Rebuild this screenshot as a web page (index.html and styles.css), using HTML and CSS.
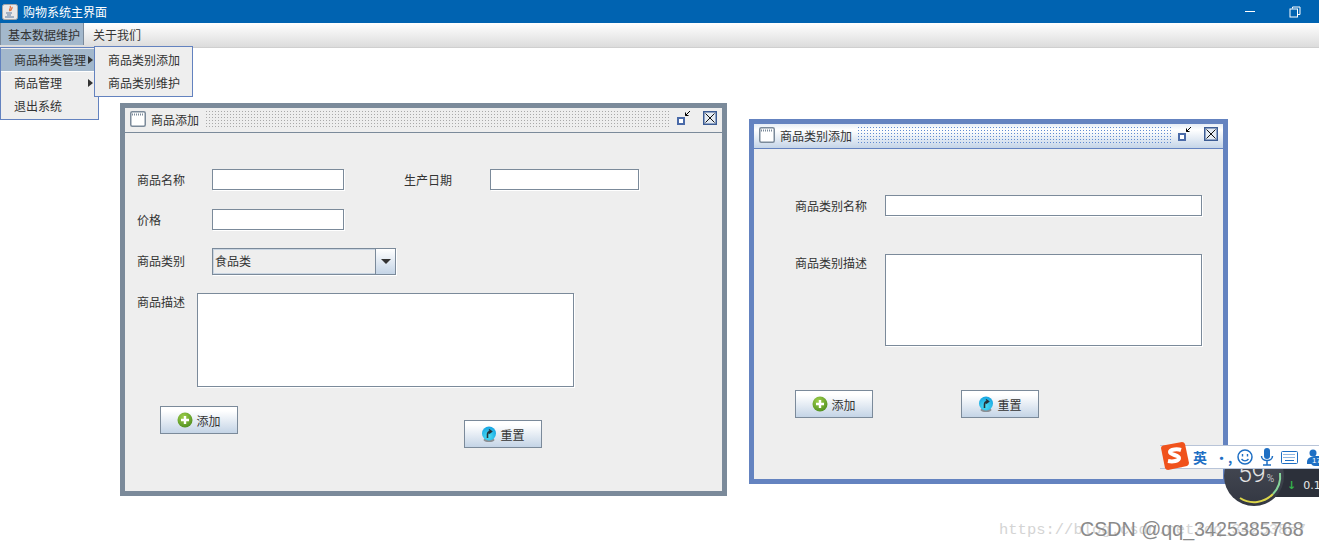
FILE: index.html
```html
<!DOCTYPE html>
<html lang="zh-CN">

<head>
    <meta charset="UTF-8">
    <title>购物系统主界面</title>
    <link rel="stylesheet" href="styles.css">
</head>

<body>
    <svg class="defs" width="0" height="0">
        <defs>
            <radialGradient id="green-ball" cx="40%" cy="30%" r="80%">
                <stop offset="0" stop-color="#9fd04a" />
                <stop offset="1" stop-color="#4a8a1e" />
            </radialGradient>
            <radialGradient id="blue-ball" cx="45%" cy="70%" r="75%">
                <stop offset="0" stop-color="#4fe0f5" />
                <stop offset="1" stop-color="#0f9fe0" />
            </radialGradient>
        </defs>
    </svg>

    <div class="titlebar">
        <div class="app-title">
            <svg class="java-icon" width="16" height="16" viewBox="0 0 16 16">
                <rect x="0.5" y="0.5" width="15" height="15" rx="2" fill="#e8e8e8" stroke="#a8a8a8" />
                <path d="M8 2c2 2-2 3 0 5M10 3c1 2-2 2-1 4" fill="none" stroke="#e0703c" stroke-width="1.200" />
                <path d="M4 8.500h6v1H4zM5 10.500h4v1H5zM3 12.500h9v1H3z" fill="#5a7ba0" />
            </svg>
            <span>购物系统主界面</span>
        </div>
        <div class="win-buttons">
            <svg width="12" height="12" viewBox="0 0 12 12">
                <path d="M1 5.500h10" stroke="#fff" stroke-width="1" />
            </svg>
            <svg width="12" height="12" viewBox="0 0 12 12">
                <path d="M3.500 2.500V1h7.500v7.500H9" fill="none" stroke="#fff" />
                <rect x="1" y="3" width="7.500" height="8" fill="none" stroke="#fff" />
            </svg>
        </div>
    </div>

    <div class="menubar">
        <div class="menu-title selected">基本数据维护</div>
        <div class="menu-title">关于我们</div>
    </div>

    <div class="desktop">
        <div class="popup main-popup">
            <div class="popup-item selected">商品种类管理<i class="arrow"></i></div>
            <div class="popup-item">商品管理<i class="arrow"></i></div>
            <div class="popup-item">退出系统</div>
        </div>
        <div class="popup sub-popup">
            <div class="popup-item">商品类别添加</div>
            <div class="popup-item">商品类别维护</div>
        </div>

        <!-- 商品添加 -->
        <div class="frame goods-frame">
            <div class="frame-title">
                <svg class="frame-icon" width="16" height="16" viewBox="0 0 16 16">
                    <rect x="0.750" y="0.750" width="14.500" height="14.500" rx="1.500" fill="#fff" stroke="#7b8a9a" stroke-width="1.500" />
                    <path d="M2 3.500h12" stroke="#7b8a9a" stroke-dasharray="1 1" stroke-width="2" />
                </svg>
                <span>商品添加</span>
                <div class="dots"></div>
                <svg class="ctl-min" width="16" height="16" viewBox="0 0 16 16">
                    <rect x="2" y="8" width="6" height="6" fill="#fff" stroke="#4a6aa8" stroke-width="2" />
                    <path d="M14 1L9.500 5.500M9.500 2.500v3h3" fill="none" stroke="#000" />
                </svg>
                <svg class="ctl-close" width="14" height="14" viewBox="0 0 14 14">
                    <rect x="0.750" y="0.750" width="12.500" height="12.500" fill="#e4ebf3" stroke="#3c5c94" stroke-width="1.500" />
                    <path d="M2.500 2.500l9 9M11.500 2.500l-9 9" stroke="#111" />
                </svg>
            </div>
            <div class="goods-body">
                <div class="row row-name">
                    <label class="lbl">商品名称</label>
                    <div class="field short"></div>
                    <label class="lbl date-lbl">生产日期</label>
                    <div class="field date"></div>
                </div>
                <div class="row row-price">
                    <label class="lbl">价格</label>
                    <div class="field short"></div>
                </div>
                <div class="row row-type">
                    <label class="lbl">商品类别</label>
                    <div class="combo">
                        <div class="combo-value">食品类</div>
                        <div class="combo-btn"><i></i></div>
                    </div>
                </div>
                <div class="row row-desc">
                    <label class="lbl desc-lbl">商品描述</label>
                    <div class="area goods-area"></div>
                </div>
                <div class="goods-actions">
                    <button class="btn">
                        <svg width="16" height="16" viewBox="0 0 16 16">
                            <circle cx="8" cy="8" r="7.500" fill="url(#green-ball)" />
                            <path d="M8 4v8M4 8h8" stroke="#fff" stroke-width="2.400" />
                        </svg>
                        添加
                    </button>
                    <button class="btn reset-low">
                        <svg width="16" height="16" viewBox="0 0 16 16">
                            <ellipse cx="8" cy="14" rx="5.500" ry="2" fill="#8a8f94" />
                            <circle cx="8" cy="7.500" r="7" fill="url(#blue-ball)" />
                            <path d="M6.500 12V8.500c0-2 1-3 3-3M8 3.500l2.500 2-2.500 2" fill="none" stroke="#263238" stroke-width="1.600" />
                        </svg>
                        重置
                    </button>
                </div>
            </div>
        </div>

        <!-- 商品类别添加 -->
        <div class="frame type-frame">
            <div class="frame-title">
                <svg class="frame-icon" width="16" height="16" viewBox="0 0 16 16">
                    <rect x="0.750" y="0.750" width="14.500" height="14.500" rx="1.500" fill="#fff" stroke="#7b8a9a" stroke-width="1.500" />
                    <path d="M2 3.500h12" stroke="#7b8a9a" stroke-dasharray="1 1" stroke-width="2" />
                </svg>
                <span>商品类别添加</span>
                <div class="dots"></div>
                <svg class="ctl-min" width="16" height="16" viewBox="0 0 16 16">
                    <rect x="2" y="8" width="6" height="6" fill="#fff" stroke="#4a6aa8" stroke-width="2" />
                    <path d="M14 1L9.500 5.500M9.500 2.500v3h3" fill="none" stroke="#000" />
                </svg>
                <svg class="ctl-close" width="14" height="14" viewBox="0 0 14 14">
                    <rect x="0.750" y="0.750" width="12.500" height="12.500" fill="#e4ebf3" stroke="#3c5c94" stroke-width="1.500" />
                    <path d="M2.500 2.500l9 9M11.500 2.500l-9 9" stroke="#111" />
                </svg>
            </div>
            <div class="type-body">
                <div class="row">
                    <label class="lbl wide">商品类别名称</label>
                    <div class="field type-name"></div>
                </div>
                <div class="row row-type-desc">
                    <label class="lbl wide desc-lbl">商品类别描述</label>
                    <div class="area type-area"></div>
                </div>
                <div class="type-actions">
                    <button class="btn">
                        <svg width="16" height="16" viewBox="0 0 16 16">
                            <circle cx="8" cy="8" r="7.500" fill="url(#green-ball)" />
                            <path d="M8 4v8M4 8h8" stroke="#fff" stroke-width="2.400" />
                        </svg>
                        添加
                    </button>
                    <button class="btn">
                        <svg width="16" height="16" viewBox="0 0 16 16">
                            <ellipse cx="8" cy="14" rx="5.500" ry="2" fill="#8a8f94" />
                            <circle cx="8" cy="7.500" r="7" fill="url(#blue-ball)" />
                            <path d="M6.500 12V8.500c0-2 1-3 3-3M8 3.500l2.500 2-2.500 2" fill="none" stroke="#263238" stroke-width="1.600" />
                        </svg>
                        重置
                    </button>
                </div>
            </div>
        </div>
    </div>

    <!-- 悬浮的输入法和加速球 -->
    <div class="gauge-strip"><span class="speed"><b>↓</b>0.1</span></div>
    <div class="gauge">
        <svg width="60" height="60" viewBox="0 0 60 60">
            <path d="M16 52A26 26 0 0 0 49 48" fill="none" stroke="#dcd64a" stroke-width="2" />
            <path d="M49 48A26 26 0 0 0 56 27" fill="none" stroke="#86d49a" stroke-width="2" />
        </svg>
        <span class="gauge-num">59<small>%</small></span>
    </div>
    <div class="ime">
        <svg class="ime-logo" width="29" height="28" viewBox="0 0 29 28">
            <path d="M1 6Q1 4 3 3.500L22 0q2 0 3 2l4 19q0 2-2 3L8 28q-2 0-3-2z" fill="#f0521c" />
            <path d="M21 8c-3-1-11-1-11 2s9 3 9 6-6 4-11 3" fill="none" stroke="#fff" stroke-width="4" />
        </svg>
        <span class="ime-lang">英</span>
        <span class="ime-punct">•,</span>
        <svg class="ime-smile" width="16" height="16" viewBox="0 0 16 16">
            <circle cx="8" cy="8" r="7" fill="none" stroke="#1e6fc4" stroke-width="1.500" />
            <path d="M5.500 5v2.500M10.500 5v2.500M4.500 10c2 2.500 5 2.500 7 0" fill="none" stroke="#1e6fc4" stroke-width="1.400" />
        </svg>
        <svg class="ime-mic" width="14" height="18" viewBox="0 0 14 18">
            <rect x="4" y="0" width="6" height="11" rx="3" fill="#1e6fc4" />
            <path d="M1.500 8c0 6 11 6 11 0M7 13v4M3 17h8" fill="none" stroke="#1e6fc4" stroke-width="1.500" />
        </svg>
        <svg class="ime-keys" width="17" height="13" viewBox="0 0 17 13">
            <rect x="0.500" y="0.500" width="16" height="12" rx="1" fill="#fff" stroke="#1e6fc4" />
            <path d="M2.500 3.500h12M2.500 6.500h12" stroke="#1e6fc4" stroke-dasharray="1 1" />
            <path d="M4 9.500h9" stroke="#1e6fc4" />
        </svg>
        <div class="ime-user">
            <svg width="14" height="17" viewBox="0 0 14 17">
                <circle cx="7" cy="4" r="3.500" fill="#1e6fc4" />
                <path d="M1 13c0-7 12-7 12 0v2H1z" fill="#1e6fc4" />
            </svg>
            <span class="ime-badge">17</span>
        </div>
    </div>

    <div class="watermark">https://blog.csdn.net/qq_34253857</div>
    <div class="watermark csdn">CSDN @qq_3425385768</div>
</body>

</html>
```

FILE: styles.css
```css
/*General*/
* {
    margin: 0;
    padding: 0;
    box-sizing: border-box;
}

html,
body {
    height: 550px;
    overflow: hidden;
}

body {
    position: relative;
    background-color: #fff;
    font-family: "Noto Sans CJK SC", "Liberation Sans", sans-serif;
    font-size: 12px;
    color: #333;
}

.defs {
    position: absolute;
}

/*Title bar*/
.titlebar {
    display: flex;
    justify-content: space-between;
    align-items: center;
    height: 23px;
    padding-left: 2px;
    background-color: #0063b1;
    color: #fff;
}

.app-title {
    display: flex;
    align-items: center;
    gap: 5px;
}

.win-buttons {
    display: flex;
    gap: 33px;
    padding-right: 18px;
}

/*Menu bar*/
.menubar {
    display: flex;
    height: 25px;
    padding-bottom: 2px;
    background: linear-gradient(#fff, #dcdcdc);
    border-bottom: 1px solid #cfcfcf;
}

.menu-title {
    display: flex;
    align-items: center;
    padding-left: 9px;
    white-space: nowrap;
}

.menu-title.selected {
    width: 84px;
    padding-left: 7px;
    background-color: #a3b8cc;
    border: 1px solid #7b8a9a;
    border-top: none;
    border-bottom: none;
}

/*Desktop*/
.desktop {
    position: relative;
    height: 502px;
}

/*Popups*/
.popup {
    position: absolute;
    z-index: 3;
    background-color: #eee;
    border: 1px solid #6382bf;
}

.main-popup {
    left: 0;
    top: -1px;
    width: 99px;
    height: 73px;
    padding-top: 1px;
}

.sub-popup {
    left: 94px;
    top: -2px;
    width: 99px;
    height: 51px;
    padding-top: 2px;
    z-index: 4;
}

.popup-item {
    position: relative;
    height: 23px;
    line-height: 22px;
    padding-left: 13px;
    white-space: nowrap;
}

.popup-item.selected {
    background-color: #a3b8cc;
    border-bottom: 1px solid #fff;
}

.arrow {
    position: absolute;
    right: 5px;
    top: 7px;
    border-left: 5px solid #333;
    border-top: 4px solid transparent;
    border-bottom: 4px solid transparent;
}

/*Internal frames*/
.frame {
    position: absolute;
    display: flex;
    flex-direction: column;
    background-color: #eee;
    border: 5px solid #7b8a9a;
}

.goods-frame {
    left: 120px;
    top: 55px;
    width: 607px;
    height: 393px;
}

.type-frame {
    left: 749px;
    top: 71px;
    width: 479px;
    height: 365px;
    border-color: #6483c0;
}

.frame-title {
    display: flex;
    align-items: center;
    flex-shrink: 0;
    height: 25px;
    padding: 0 5px 2px;
    background-color: #eee;
    border-bottom: 1px solid #7b8a9a;
}

.frame-icon {
    flex-shrink: 0;
    margin-right: 5px;
}

.dots {
    flex: 1;
    align-self: stretch;
    margin: 2px 5px 1px 6px;
    background-image: radial-gradient(#a9a9a9 0.7px, transparent 0.8px);
    background-size: 3px 3px;
}

.ctl-min {
    margin-right: 11px;
    margin-top: -2px;
}

.ctl-close {
    margin-top: -2px;
}

.type-frame .frame-title {
    background: linear-gradient(#e6edf6, #fff 25%, #c5d5e8);
    border-bottom-color: #6483c0;
}

.type-frame .dots {
    background-image: radial-gradient(#5f8ad0 0.7px, transparent 0.8px);
    margin-left: 5px;
}

/*Fields*/
.row {
    display: flex;
    align-items: center;
}

.lbl {
    width: 75px;
    flex-shrink: 0;
    white-space: nowrap;
}

.field {
    height: 21px;
    background-color: #fff;
    border: 1px solid #7b8a9a;
    box-shadow: 1px 1px 0 #fff;
}

.short {
    width: 132px;
}

.date {
    width: 149px;
}

.date-lbl {
    width: 86px;
    margin-left: 60px;
}

.area {
    background-color: #fff;
    border: 1px solid #7b8a9a;
    box-shadow: 1px 1px 0 #fff;
}

/*Goods form*/
.goods-body {
    padding: 36px 0 0 12px;
}

.row-price {
    margin-top: 19px;
}

.row-type {
    margin-top: 18px;
}

.row-type .lbl {
    margin-top: -2px;
}

.row-desc {
    align-items: flex-start;
    margin-top: 18px;
}

.row-desc .lbl {
    width: 60px;
}

.desc-lbl {
    line-height: 18px;
}

.goods-area {
    width: 377px;
    height: 94px;
}

.combo {
    display: flex;
    width: 184px;
    height: 27px;
    border: 1px solid #7b8a9a;
    box-shadow: 1px 1px 0 #fff;
}

.combo-value {
    flex: 1;
    line-height: 22px;
    padding-left: 1px;
    border: 1px solid #c9d5e2;
    border-right: none;
}

.combo-btn {
    display: flex;
    justify-content: center;
    align-items: center;
    width: 20px;
    border-left: 1px solid #7b8a9a;
    background: linear-gradient(#fff, #c4d4e6);
}

.combo-btn i {
    border-top: 5px solid #333;
    border-left: 5px solid transparent;
    border-right: 5px solid transparent;
}

.goods-actions {
    display: flex;
    align-items: flex-start;
    gap: 226px;
    margin: 19px 0 0 23px;
}

.reset-low {
    margin-top: 14px;
}

/*Buttons*/
.btn {
    display: flex;
    justify-content: center;
    align-items: center;
    gap: 3px;
    width: 78px;
    height: 28px;
    font-family: inherit;
    font-size: 12px;
    color: #333;
    border: 1px solid #7b8a9a;
    background: linear-gradient(#fff 15%, #c4d4e6);
}

/*Type form*/
.type-body {
    padding: 46px 0 0 41px;
}

.type-body .lbl {
    width: 90px;
}

.type-name {
    width: 317px;
}

.row-type-desc {
    align-items: flex-start;
    margin-top: 38px;
}

.type-area {
    width: 317px;
    height: 92px;
}

.type-actions {
    display: flex;
    gap: 88px;
    margin-top: 44px;
}

/*Floating things*/
.ime {
    position: absolute;
    left: 1160px;
    top: 445px;
    z-index: 7;
    display: flex;
    align-items: center;
    width: 159px;
    height: 24px;
    background: linear-gradient(90deg, transparent 22px, #fff 22px);
    border-top: 1px solid #b8c4d8;
    border-bottom: 1px solid #b8c4d8;
}

.ime svg,
.ime span,
.ime div {
    flex-shrink: 0;
}

.ime-logo {
    margin: -2px 4px 0 0;
}

.ime-lang {
    font-size: 14px;
    font-weight: 700;
    color: #1e6fc4;
}

.ime-punct {
    width: 14px;
    margin-left: 8px;
    font-size: 13px;
    font-weight: 700;
    color: #1e6fc4;
    text-align: right;
}

.ime-smile {
    margin-left: 8px;
}

.ime-mic {
    margin-left: 7px;
}

.ime-keys {
    margin-left: 7px;
}

.ime-user {
    position: relative;
    width: 14px;
    height: 17px;
    margin-left: 8px;
}

.ime-badge {
    position: absolute;
    left: 5px;
    top: 7px;
    padding: 0 1px;
    border-radius: 4px;
    background-color: #1e6fc4;
    font-family: "Liberation Sans", sans-serif;
    font-size: 8px;
    line-height: 10px;
    color: #fff;
}

.gauge {
    position: absolute;
    left: 1224px;
    top: 446px;
    z-index: 6;
    width: 60px;
    height: 60px;
    border-radius: 50%;
    background: linear-gradient(#4a4e58, #333742);
}

.gauge svg {
    position: absolute;
    left: 0;
    top: 0;
}

.gauge-num {
    position: absolute;
    left: 14px;
    top: 13px;
    font-family: Roboto, "Liberation Sans", sans-serif;
    font-size: 25px;
    font-weight: 300;
    color: #e4e4e4;
}

.gauge-num small {
    margin-left: 1px;
    font-size: 10px;
}

.gauge-strip {
    position: absolute;
    left: 1270px;
    top: 468px;
    z-index: 5;
    width: 49px;
    height: 29px;
    padding: 11px 0 0 17px;
    background-color: #2c303a;
    font-family: "DejaVu Sans", sans-serif;
    font-size: 11px;
    color: #e8e8e8;
}

.speed b {
    margin-right: 7px;
    color: #35b04a;
}

.watermark {
    position: absolute;
    left: 999px;
    top: 521px;
    z-index: 1;
    font-family: "Liberation Mono", monospace;
    font-size: 15.500px;
    white-space: nowrap;
    color: #d4d4d4;
}

.watermark.csdn {
    left: 1080px;
    top: 518px;
    z-index: 2;
    font-family: "Liberation Sans", sans-serif;
    font-size: 19.700px;
    color: #8a8a8a;
}
```
